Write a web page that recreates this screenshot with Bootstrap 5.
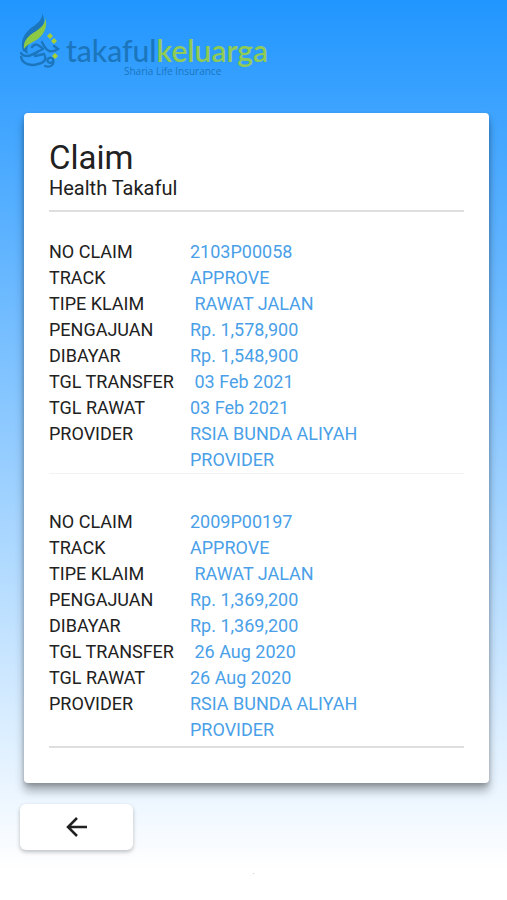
<!DOCTYPE html>
<html lang="id">
<head>
<meta charset="utf-8">
<meta name="viewport" content="width=device-width, initial-scale=1">
<title>Claim - Takaful Keluarga</title>
<link href="https://cdn.jsdelivr.net/npm/bootstrap@5.3.0/dist/css/bootstrap.min.css" rel="stylesheet">
<style>
body { font-family: Roboto, "Liberation Sans", sans-serif; color: #212121; background: linear-gradient(#2196ff, #ffffff 870px) no-repeat #fff; }
.brand { padding: 12px 20px 0; gap: 6px; height: 113px; color: #1b76bd; font-family: Lato, sans-serif; }
.brand svg { width: 40px; height: 58px; }
.brand-text { padding-top: 22px; }
.brand-name { font-size: 30px; line-height: 32px; font-weight: 500; }
.brand-name b { font-weight: 600; color: #8fcb55; }
.brand-tag { font: 10px/10px "Open Sans", sans-serif; padding-left: 58px; }
.claim-card { margin: 0 18px 0 24px; padding: 26px 25px 35px 25px; border-radius: 4px; box-shadow: 0 8px 10px rgba(0,0,0,.3), 0 2px 4px rgba(0,0,0,.2); }
.claim-card h1 { font-size: 33px; line-height: 37px; font-weight: 400; }
.claim-card h2 { font-size: 20px; line-height: 24px; font-weight: 400; }
.claim-head { padding-bottom: 10px; border-bottom: 2px solid #dedede; }
.claim { padding-top: 27px; font-size: 18px; line-height: 26px; border-bottom: 1px solid #f2f2f2; }
.claim + .claim { padding-top: 35px; padding-bottom: 3px; border-bottom: 2px solid #dedede; }
.claim div { display: grid; grid-template-columns: 141px 1fr; }
.claim dt, .claim dd { font-weight: 400; margin: 0; }
.claim dd { color: #4a9fe8; white-space: pre-wrap; }
.btn-back { width: 113px; height: 46px; margin: 21px 0 0 20px; border-radius: 6px; background: #fff; box-shadow: 0 2px 4px rgba(0,0,0,.25); }
.dot { margin-top: 15px; font-size: 8px; line-height: 14px; color: #aaa; }
</style>
<script src="https://cdn.jsdelivr.net/npm/bootstrap@5.3.0/dist/js/bootstrap.bundle.min.js"></script>
</head>
<body>
<header class="brand d-flex align-items-start">
<svg viewBox="0 0 40 58" fill="none" stroke-linecap="round" aria-hidden="true">
<path d="M22 1C23 7 18 11 11 16C3 22 0 31 3 39L8 42C6 36 8 31 14 26C22 20 27 10 22 1Z" fill="#1b76bd"/>
<path d="M25 6C26 12 20 17 13 21C7 25 3 30 4 37C8 31 13 31 19 26C25 21 28 13 25 6Z" fill="#8cc944"/>
<path d="M12 35C15 31 18 32 23 37M23 37C17 40 13 43 8 44C4 44 2 43 1 41M1 45C3 53 12 54 18 52C24 51 26 48 25 44M22 30C24 34 25 37 29 39C32 40 35 39 38 37L34 34M15 44L24 42" stroke="#1b76bd" stroke-width="2.400"/>
<path d="M33 47C30 44 26 47 28 50C31 52 34 50 33 47C35 53 30 56 25 54" stroke="#1b76bd" stroke-width="2.200"/>
<path d="M30 21l3 3-3 3-3-3zM34 26l3 3-3 3-3-3zM35 41l3 3-3 3-3-3z" fill="#a5cf35"/>
</svg>
<div class="brand-text"><div class="brand-name">takaful<b>keluarga</b></div><div class="brand-tag">Sharia Life Insurance</div></div>
</header>
<main>
<section class="claim-card bg-white">
<div class="claim-head"><h1 class="m-0">Claim</h1><h2 class="m-0">Health Takaful</h2></div>
<dl class="claim m-0">
<div><dt>NO CLAIM</dt><dd>2103P00058</dd></div>
<div><dt>TRACK</dt><dd>APPROVE</dd></div>
<div><dt>TIPE KLAIM</dt><dd> RAWAT JALAN</dd></div>
<div><dt>PENGAJUAN</dt><dd>Rp. 1,578,900</dd></div>
<div><dt>DIBAYAR</dt><dd>Rp. 1,548,900</dd></div>
<div><dt>TGL TRANSFER</dt><dd> 03 Feb 2021</dd></div>
<div><dt>TGL RAWAT</dt><dd>03 Feb 2021</dd></div>
<div><dt>PROVIDER</dt><dd>RSIA BUNDA ALIYAH
PROVIDER</dd></div>
</dl>
<dl class="claim m-0">
<div><dt>NO CLAIM</dt><dd>2009P00197</dd></div>
<div><dt>TRACK</dt><dd>APPROVE</dd></div>
<div><dt>TIPE KLAIM</dt><dd> RAWAT JALAN</dd></div>
<div><dt>PENGAJUAN</dt><dd>Rp. 1,369,200</dd></div>
<div><dt>DIBAYAR</dt><dd>Rp. 1,369,200</dd></div>
<div><dt>TGL TRANSFER</dt><dd> 26 Aug 2020</dd></div>
<div><dt>TGL RAWAT</dt><dd>26 Aug 2020</dd></div>
<div><dt>PROVIDER</dt><dd>RSIA BUNDA ALIYAH
PROVIDER</dd></div>
</dl>
</section>
<button type="button" class="btn btn-back border-0 d-flex align-items-center justify-content-center p-0" aria-label="Back">
<svg width="22" height="22" viewBox="0 0 22 22" fill="none" stroke="#212121" stroke-width="2.500" aria-hidden="true"><path d="M21 11H2M11 2L2 11l9 9"/></svg>
</button>
</main>
<footer class="dot text-center">.</footer>
</body>
</html>
